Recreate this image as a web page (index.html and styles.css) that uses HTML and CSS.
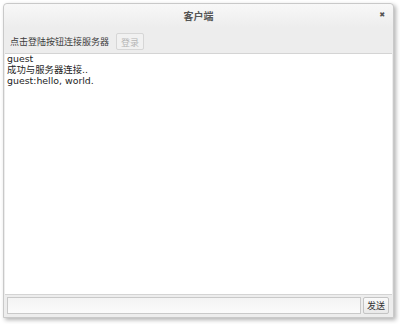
FILE: index.html
```html
<!DOCTYPE html>
<html lang="zh-CN">
<head>
    <meta charset="UTF-8">
    <title>客户端</title>
    <link rel="stylesheet" href="styles.css">
</head>
<body>
    <div class="window">
        <div class="titlebar">
            <span class="title">客户端</span>
            <span class="close">&#x2716;</span>
        </div>

        <div class="toolbar">
            <span class="hint">点击登陆按钮连接服务器</span>
            <button class="btn" disabled>登录</button>
        </div>

        <div class="log">
            <div>guest</div>
            <div>成功与服务器连接..</div>
            <div>guest:hello, world.</div>
        </div>

        <div class="sendbar">
            <input class="msg" type="text">
            <button class="btn">发送</button>
        </div>
    </div>
</body>
</html>
```

FILE: styles.css
```css
* {
    margin: 0;
    padding: 0;
    box-sizing: border-box;
    font-family: "DejaVu Sans", "Noto Sans CJK SC", sans-serif;
}

body {
    background: #fff;
    padding: 3px 6px 6px 3px;
    width: 400px;
    height: 324px;
}

.window {
    display: flex;
    flex-direction: column;
    width: 391px;
    height: 315px;
    background: #ededed;
    border: 1px solid #c9c9c9;
    border-radius: 4px 4px 0 0;
    box-shadow: 2px 2px 4px rgba(0, 0, 0, 0.3);
}

.titlebar {
    position: relative;
    height: 23px;
    display: flex;
    justify-content: center;
    align-items: center;
    background: linear-gradient(#f8f8f8, #ededed);
    border-radius: 4px 4px 0 0;
}

.title {
    font-size: 10px;
    font-weight: bold;
    color: #555;
}

.close {
    position: absolute;
    right: 8px;
    top: 7px;
    font-size: 7px;
    color: #555;
}

.toolbar {
    display: flex;
    align-items: center;
    gap: 7px;
    height: 26px;
    padding: 2px 6px 0;
}

.hint {
    font-size: 9px;
    color: #3c3c3c;
}

.btn {
    font-size: 9px;
    color: #333;
    padding: 2px 4px;
    background: linear-gradient(#fafafa, #e9e9e9);
    border: 1px solid #c4c4c4;
    border-radius: 2px;
    height: 17px;
}

.btn:disabled {
    color: #b5b5b5;
    background: #f1f1f1;
    border-color: #d6d6d6;
}

.log {
    flex: 1;
    background: #fff;
    margin: 0 1px 0 1px;
    border-top: 1px solid #d4d4d4;
    border-bottom: 1px solid #d4d4d4;
    padding: 0 2px;
    font-size: 9.4px;
    line-height: 11px;
    color: #1e1e1e;
}

.log div:first-child {
    margin-top: -1px;
}

.sendbar {
    display: flex;
    align-items: center;
    gap: 2px;
    height: 22px;
    padding: 0 4px 1px 3px;
}

.msg {
    flex: 1;
    height: 17px;
    border: 1px solid #c9c9c9;
    background: linear-gradient(#f3f3f3, #fbfbfb);
}

.sendbar .btn {
    width: 26px;
    padding: 0;
}
```
